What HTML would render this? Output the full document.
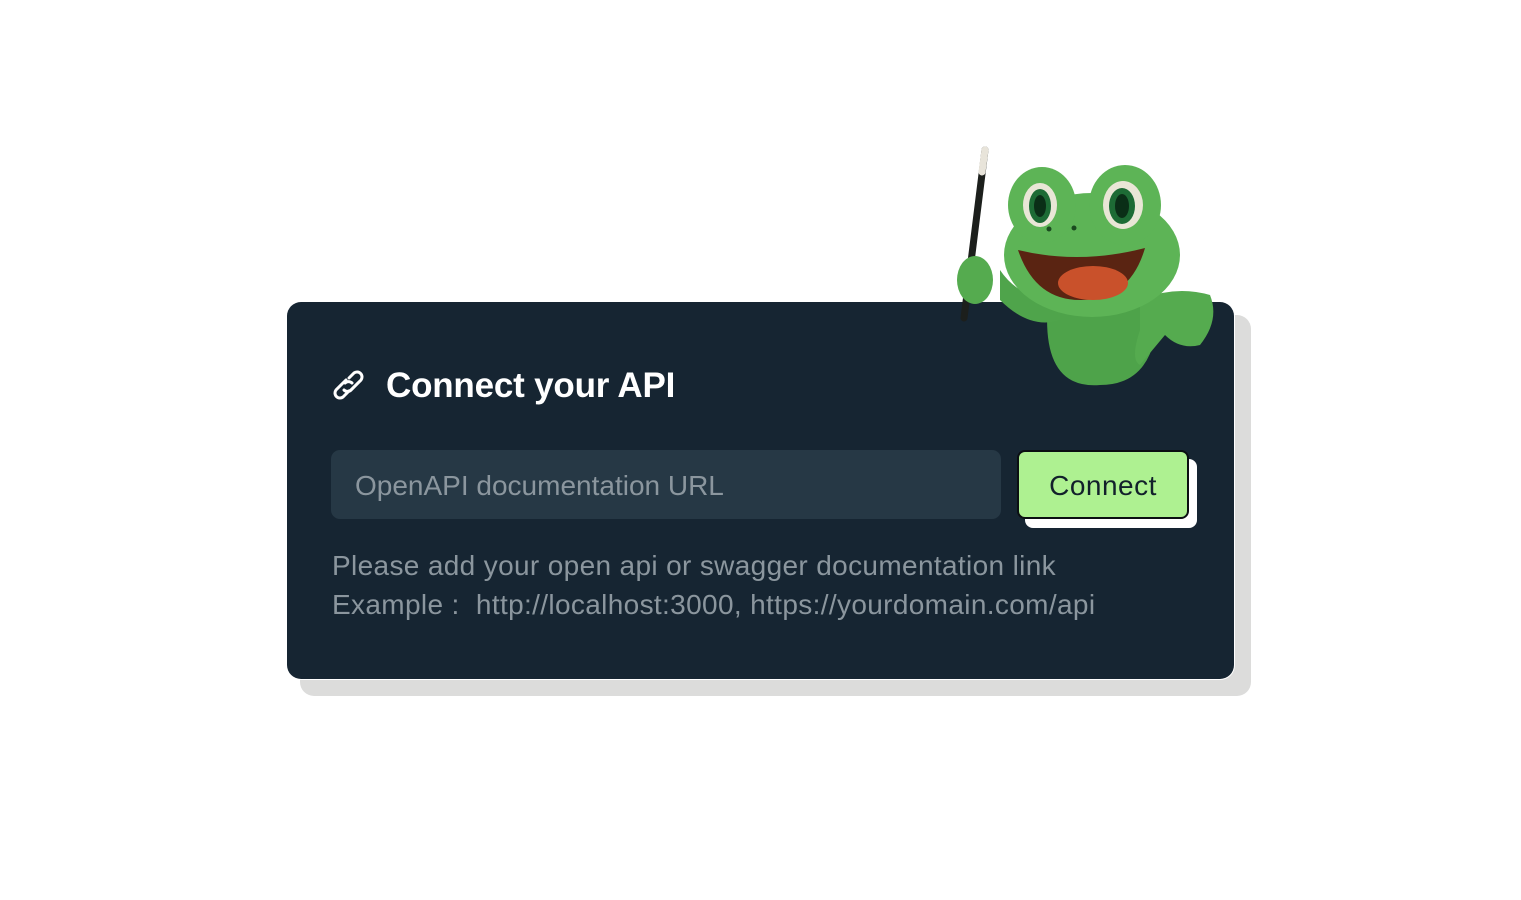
<!DOCTYPE html>
<html><head><meta charset="utf-8"><style>
body{margin:0;width:1521px;height:900px;background:#fff;position:relative;font-family:"Liberation Sans",sans-serif;overflow:hidden}
.shadow{position:absolute;left:300px;top:315px;width:951px;height:381px;background:#dcdcdb;border-radius:14px}
.card{position:absolute;left:287px;top:302px;width:947px;height:377px;background:#162532;border-radius:14px;box-shadow:0 0 0 1px #fff}
.title{position:absolute;left:386px;top:366px;color:#fff;font-size:35px;font-weight:bold;letter-spacing:-0.2px}
.input{position:absolute;left:331px;top:450px;width:670px;height:69px;background:#263845;border-radius:9px}
.input span{position:absolute;left:24px;top:20px;color:#8b969e;font-size:28px}
.bs{position:absolute;left:1025px;top:459px;width:172px;height:69px;background:#fff;border-radius:8px}
.btn{position:absolute;left:1017px;top:450px;width:168px;height:65px;background:#aef191;border:2px solid #0b0f12;border-radius:8px;color:#12202b;font-size:28px;letter-spacing:0.5px;text-align:center;line-height:67px}
.help{position:absolute;left:332px;top:546px;color:#8b969e;font-size:28px;letter-spacing:0.35px;line-height:39px}
</style></head><body>
<div class="shadow"></div>
<div class="card"></div>
<svg style="position:absolute;left:330px;top:370px" width="38" height="32" viewBox="0 0 38 32" fill="none" stroke="#fff" stroke-width="3" stroke-linecap="round"><path d="M16 10 L6 20 a5 5 0 0 0 7 7 l6 -6"/><path d="M14 20 a5 5 0 0 0 7 0 l10 -10 a5 5 0 0 0 -7 -7 l-5 5"/><path d="M22 13 a5 5 0 0 0 -7 0"/></svg>
<div class="title">Connect your API</div>
<div class="input"><span>OpenAPI documentation URL</span></div>
<div class="bs"></div>
<div class="btn">Connect</div>
<div class="help">Please add your open api or swagger documentation link<br>Example :&nbsp; http://localhost:3000, https://yourdomain.com/api</div>
<svg style="position:absolute;left:940px;top:140px" width="300" height="260" viewBox="940 140 300 260">
<line x1="985" y1="150" x2="964" y2="318" stroke="#1c1f1c" stroke-width="7" stroke-linecap="round"/>
<line x1="985" y1="150" x2="982" y2="172" stroke="#e8e4da" stroke-width="7" stroke-linecap="round"/>
<path d="M1048 300 Q1040 390 1100 385 Q1160 385 1158 300 Z" fill="#4ea34a"/>
<path d="M1000 300 Q1030 330 1060 320 L1060 300 Q1020 300 1000 270 Z" fill="#4fa44b"/>
<ellipse cx="975" cy="280" rx="18" ry="24" fill="#55ab4f"/>
<path d="M1140 300 Q1175 285 1210 295 Q1220 320 1200 345 Q1180 350 1165 335 L1140 365 Q1130 360 1140 330 Z" fill="#55ab4f"/>
<ellipse cx="1092" cy="255" rx="88" ry="62" fill="#5db456"/>
<ellipse cx="1042" cy="205" rx="34" ry="38" fill="#5db456"/>
<ellipse cx="1125" cy="205" rx="36" ry="40" fill="#5db456"/>
<ellipse cx="1040" cy="205" rx="17" ry="22" fill="#e9e6d6"/>
<ellipse cx="1040" cy="206" rx="11" ry="17" fill="#1d6b35"/>
<ellipse cx="1040" cy="206" rx="6" ry="11" fill="#0a2e17"/>
<ellipse cx="1123" cy="205" rx="20" ry="24" fill="#e9e6d6"/>
<ellipse cx="1122" cy="206" rx="13" ry="18" fill="#1d6b35"/>
<ellipse cx="1122" cy="206" rx="7" ry="12" fill="#0a2e17"/>
<path d="M1018 250 Q1080 265 1145 248 Q1130 300 1080 300 Q1035 300 1018 250 Z" fill="#5a2412"/>
<ellipse cx="1093" cy="283" rx="35" ry="17" fill="#c9512b"/>
<circle cx="1049" cy="229" r="2.5" fill="#1a4a1f"/><circle cx="1074" cy="228" r="2.5" fill="#1a4a1f"/>
</svg>
</body></html>
